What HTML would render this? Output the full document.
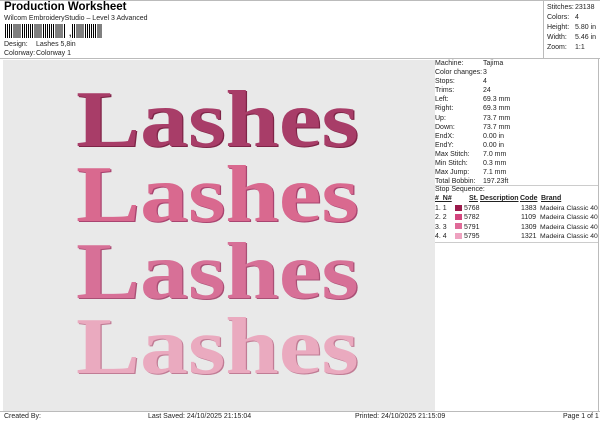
<!DOCTYPE html>
<html><head><meta charset="utf-8"><style>
*{margin:0;padding:0;box-sizing:border-box}
body{width:600px;height:424px;background:#fff;position:relative;overflow:hidden;font-family:"Liberation Sans",sans-serif;color:#222;font-size:7px}
.a{position:absolute;white-space:nowrap}
.L{position:absolute;font-family:"Liberation Serif",serif;font-weight:bold;font-size:80px;line-height:1;left:76px;transform:scaleX(1.2);transform-origin:0 0}
</style></head><body>
<div class="a" style="left:4px;top:1px;font-size:11.5px;font-weight:bold;color:#000">Production Worksheet</div>
<div class="a" style="left:4px;top:15px">Wilcom EmbroideryStudio – Level 3 Advanced</div>
<div class="a" style="left:5px;top:24px;width:97px;height:14px;background:repeating-linear-gradient(90deg,#000 0 1px,#fff 1px 2px,#000 2px 3px,#fff 3px 4.2px)"></div>
<div class="a" style="left:66px;top:24px;width:5px;height:15px;background:#fff"></div>
<div class="a" style="left:69px;top:28px;font-weight:bold;font-size:9px">,</div>
<div class="a" style="left:4px;top:41px">Design:</div><div class="a" style="left:36px;top:41px">Lashes 5,8in</div>
<div class="a" style="left:4px;top:50px">Colorway:</div><div class="a" style="left:36px;top:50px">Colorway 1</div>
<div class="a" style="left:0;top:0;width:600px;height:1px;background:#bbb"></div>
<div class="a" style="left:543px;top:0;width:1px;height:58px;background:#bbb"></div>
<div class="a" style="left:0;top:58px;width:600px;height:1px;background:#bbb"></div>
<div class="a" style="left:3px;top:60px;width:427px;height:351px;background:#e9e9e9"></div>
<div class="a" style="left:430px;top:60px;width:5px;height:351px;background:#e9e9e9"></div>
<div class="a" style="left:598px;top:58px;width:1px;height:353px;background:#bbb"></div>
<div class="L" style="top:80px;color:#a83d68;text-shadow:1px 1px 0 #7e2447">Lashes</div>
<div class="L" style="top:155px;color:#d9698f;text-shadow:1px 1px 0 #a94470">Lashes</div>
<div class="L" style="top:232px;color:#d77097;text-shadow:1px 1px 0 #a94f75">Lashes</div>
<div class="L" style="top:307px;color:#eaaabf;text-shadow:1px 1px 0 #c07c95">Lashes</div>
<div class="a" style="left:547px;top:3px;line-height:10px">Stitches:<br>Colors:<br>Height:<br>Width:<br>Zoom:</div>
<div class="a" style="left:575px;top:3px;line-height:10px">23138<br>4<br>5.80 in<br>5.46 in<br>1:1</div>
<div class="a" style="left:435px;top:59px;line-height:9.1px">Machine:<br>Color changes:<br>Stops:<br>Trims:<br>Left:<br>Right:<br>Up:<br>Down:<br>EndX:<br>EndY:<br>Max Stitch:<br>Min Stitch:<br>Max Jump:<br>Total Bobbin:</div>
<div class="a" style="left:483px;top:59px;line-height:9.1px">Tajima<br>3<br>4<br>24<br>69.3 mm<br>69.3 mm<br>73.7 mm<br>73.7 mm<br>0.00 in<br>0.00 in<br>7.0 mm<br>0.3 mm<br>7.1 mm<br>197.23ft</div>
<div class="a" style="left:435px;top:185px;width:163px;height:1px;background:#ccc"></div>
<div class="a" style="left:435px;top:186px">Stop Sequence:</div>
<div class="a" style="left:435px;top:195px;font-weight:bold;text-decoration:underline">#&nbsp; N#</div>
<div class="a" style="left:469px;top:195px;font-weight:bold;text-decoration:underline">St.</div>
<div class="a" style="left:480px;top:195px;font-weight:bold;text-decoration:underline">Description</div>
<div class="a" style="left:520px;top:195px;font-weight:bold;text-decoration:underline">Code</div>
<div class="a" style="left:541px;top:195px;font-weight:bold;text-decoration:underline">Brand</div>
<div class="a" style="left:435px;top:204px;line-height:9.3px">1. 1<br>2. 2<br>3. 3<br>4. 4</div>
<div class="a" style="left:455px;top:205px;width:7px;height:6px;background:#9b1a4c"></div>
<div class="a" style="left:455px;top:214px;width:7px;height:6px;background:#d3457e"></div>
<div class="a" style="left:455px;top:223px;width:7px;height:6px;background:#df6a98"></div>
<div class="a" style="left:455px;top:233px;width:7px;height:6px;background:#eea2c0"></div>
<div class="a" style="left:464px;top:204px;line-height:9.3px">5768<br>5782<br>5791<br>5795</div>
<div class="a" style="left:521px;top:204px;line-height:9.3px">1383<br>1109<br>1309<br>1321</div>
<div class="a" style="left:540px;top:204px;line-height:9.3px;font-size:6.8px">Madeira Classic 40<br>Madeira Classic 40<br>Madeira Classic 40<br>Madeira Classic 40</div>
<div class="a" style="left:435px;top:242px;width:163px;height:1px;background:#ccc"></div>
<div class="a" style="left:0;top:411px;width:600px;height:1px;background:#bbb"></div>
<div class="a" style="left:4px;top:413px">Created By:</div>
<div class="a" style="left:148px;top:413px">Last Saved: 24/10/2025 21:15:04</div>
<div class="a" style="left:355px;top:413px">Printed: 24/10/2025 21:15:09</div>
<div class="a" style="left:563px;top:413px">Page 1 of 1</div>
</body></html>
